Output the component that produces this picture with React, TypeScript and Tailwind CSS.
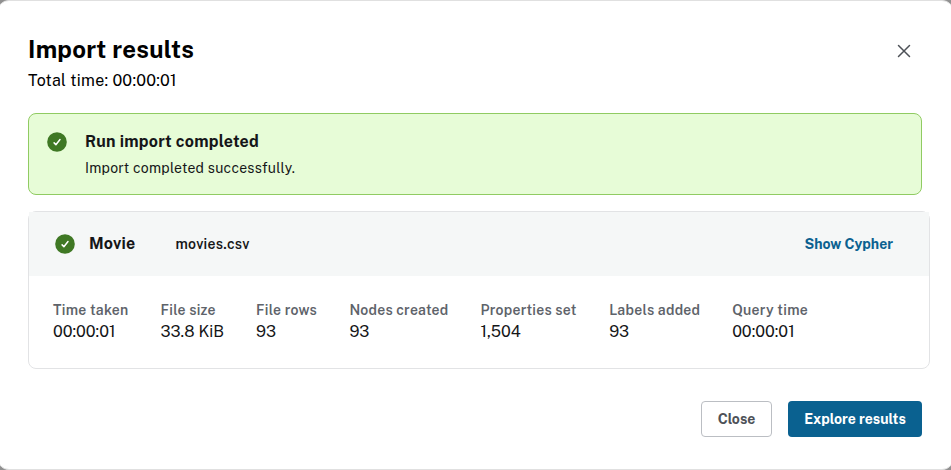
const fields = [
  ['Time taken', '00:00:01', 'w-[107.5px]'],
  ['File size', '33.8 KiB', 'w-[95.5px]'],
  ['File rows', '93', 'w-[93.4px]'],
  ['Nodes created', '93', 'w-[131px]'],
  ['Properties set', '1,504', 'w-[128.8px]'],
  ['Labels added', '93', 'w-[123px]'],
  ['Query time', '00:00:01', 'w-[107px]'],
];

function Check() {
  return (
    <svg className="h-5 w-5 shrink-0" viewBox="0 0 20 20" fill="none">
      <circle cx="10" cy="10" r="9.8" fill="#3f7824" />
      <path d="M7.1 10.9 8.9 12.7 13 7.5" stroke="white" strokeWidth="1.5" strokeLinecap="round" strokeLinejoin="round" />
    </svg>
  );
}

export default function App() {
  return (
    <div className="h-[470px] w-[951px] overflow-hidden bg-[#909090] font-['Public_Sans','Inter',sans-serif] text-[#151618]">
      <main className="-ml-[3px] flex h-[470px] w-[957px] flex-col overflow-hidden rounded-xl border border-[#e0e0e0] bg-white pl-[30px] pt-[33px]">
        <header className="flex h-[79px] w-[894px] shrink-0 justify-between">
          <div>
            <h1 className="-mt-px h-8 whitespace-nowrap text-[24px] font-bold leading-8 tracking-[0.25px] text-black">Import results</h1>
            <p className="mt-1 text-[16px] leading-6 tracking-[0.25px] text-black">Total time: 00:00:01</p>
          </div>
          <button className="mr-[11px] mt-[10px] h-[14px] w-[14px]" aria-label="Close dialog">
            <svg viewBox="0 0 14 14" fill="none" stroke="#4d5157" strokeWidth="1.5" strokeLinecap="round"><path d="m1.5 1.5 11 11m0-11-11 11" /></svg>
          </button>
        </header>
        <section className="flex h-[82px] w-[894px] shrink-0 rounded-lg border border-[#90cb62] bg-[#e7fcd7] pl-[18px] pt-[18px]">
          <Check />
          <div className="-mt-[2px] ml-[18px] tracking-[0.25px]">
            <h2 className="text-[16px] font-bold leading-6">Run import completed</h2>
            <p className="mt-1 text-[14px] leading-5">Import completed successfully.</p>
          </div>
        </section>
        <section className="mt-4 h-[158px] w-[902px] shrink-0 rounded-lg border border-[#e2e3e5]">
          <div className="flex h-16 items-center bg-[#f5f7f7] pl-[26px] pr-9">
            <Check />
            <span className="ml-[14px] w-[86.5px] text-[16px] font-bold tracking-[0.25px]">Movie</span>
            <span className="text-[14px] font-semibold tracking-[0.25px]">movies.csv</span>
            <button className="ml-auto text-[14px] font-bold text-[#0a6190]">Show Cypher</button>
          </div>
          <div className="flex pl-6 pt-6">
            {fields.map(([label, value, width]) => (
              <div key={label} className={`${width} shrink-0 whitespace-nowrap`}>
                <div className="text-[14px] font-semibold leading-5 tracking-[0.25px] text-[#5e636a]">{label}</div>
                <div className="text-[16px] leading-6">{value}</div>
              </div>
            ))}
          </div>
        </section>
        <footer className="mt-8 flex w-[894px] justify-end gap-4">
          <button className="h-9 w-[71px] rounded border border-[#bbbec3] text-[14px] font-bold text-[#4d5157]">Close</button>
          <button className="h-9 w-[134px] rounded bg-[#0a6190] text-[14px] font-bold text-white">Explore results</button>
        </footer>
      </main>
    </div>
  );
}
